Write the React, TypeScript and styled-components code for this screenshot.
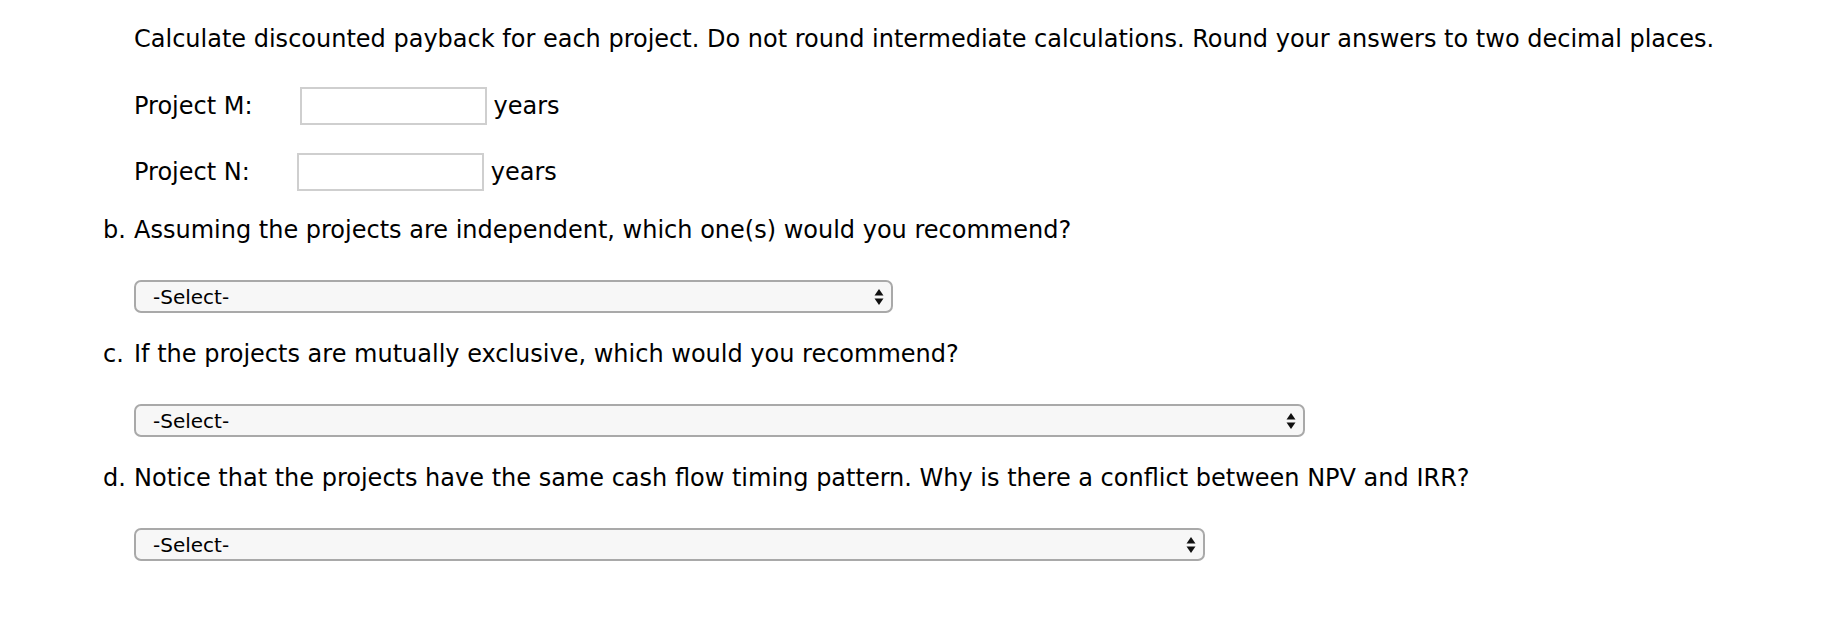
import styled, { createGlobalStyle } from "styled-components"

const GlobalStyle = createGlobalStyle`
    html, body {
        margin: 0;
        padding: 0;
        background: #fff;
    }
    body {
        font-family: "DejaVu Sans", Verdana, sans-serif;
        color: #000;
    }
`

const Page = styled.main`
    padding: 25px 0 0 103px;
    font-size: 24px;
    line-height: 28px;
`

const Intro = styled.p`
    margin: 0 0 34px 31px;
`

const ProjectRow = styled.div`
    display: flex;
    align-items: center;
    margin-left: 31px;
    margin-bottom: 28px;
`

const RowLabel = styled.span`
    margin-right: 47px;
`

const AnswerInput = styled.input`
    box-sizing: border-box;
    width: 187px;
    height: 38px;
    border: 2px solid #cfcfcf;
    background: #fff;
    font-family: inherit;
    font-size: 20px;
    padding: 0 6px;
    outline: none;
`

const Unit = styled.span`
    margin-left: 7px;
`

const Question = styled.div`
    display: grid;
    grid-template-columns: 31px 1fr;
    margin-top: -3px;
    margin-bottom: 30px;
`

const Marker = styled.span`
    text-align: left;
`

const QuestionText = styled.p`
    margin: 0 0 36px;
`

const SelectWrap = styled.div<{ width: number }>`
    position: relative;
    width: ${props => props.width}px;
    height: 33px;
`

const Dropdown = styled.select`
    appearance: none;
    -webkit-appearance: none;
    box-sizing: border-box;
    width: 100%;
    height: 100%;
    margin: 0;
    padding: 0 30px 0 17px;
    border: 2px solid #a9a9a9;
    border-radius: 7px;
    background: #f7f7f7;
    color: #000;
    font-family: "DejaVu Sans", Verdana, sans-serif;
    font-size: 20px;
    outline: none;
`

const Arrows = styled.svg`
    position: absolute;
    right: 9px;
    top: 50%;
    transform: translateY(-50%);
    pointer-events: none;
`

function SelectBox({ width }: { width: number }) {
    return (
        <SelectWrap width={width}>
            <Dropdown defaultValue="">
                <option value="">-Select-</option>
            </Dropdown>
            <Arrows width="10" height="17" viewBox="0 0 10 17">
                <path d="M5 0.5 L9.5 7 L0.5 7 Z" fill="#111" />
                <path d="M5 16.5 L9.5 10 L0.5 10 Z" fill="#111" />
            </Arrows>
        </SelectWrap>
    )
}

const questions = [
    { mark: "b.", text: "Assuming the projects are independent, which one(s) would you recommend?", width: 759 },
    { mark: "c.", text: "If the projects are mutually exclusive, which would you recommend?", width: 1171 },
    { mark: "d.", text: "Notice that the projects have the same cash flow timing pattern. Why is there a conflict between NPV and IRR?", width: 1071 },
]

export default function App() {
    return (
        <>
            <GlobalStyle />
            <Page>
                <Intro>
                    Calculate discounted payback for each project. Do not round intermediate calculations. Round your answers to two decimal places.
                </Intro>

                <ProjectRow>
                    <RowLabel>Project M:</RowLabel>
                    <AnswerInput type="text" />
                    <Unit>years</Unit>
                </ProjectRow>
                <ProjectRow>
                    <RowLabel>Project N:</RowLabel>
                    <AnswerInput type="text" />
                    <Unit>years</Unit>
                </ProjectRow>

                {questions.map(q => (
                    <Question key={q.mark}>
                        <Marker>{q.mark}</Marker>
                        <div>
                            <QuestionText>{q.text}</QuestionText>
                            <SelectBox width={q.width} />
                        </div>
                    </Question>
                ))}
            </Page>
        </>
    )
}
